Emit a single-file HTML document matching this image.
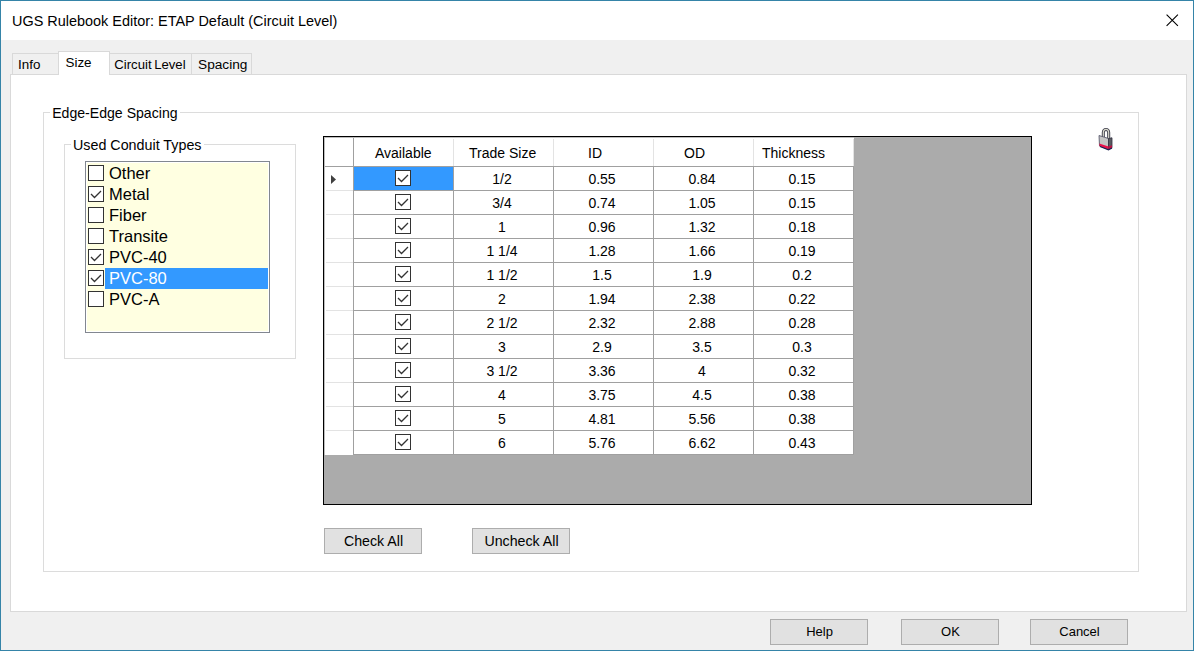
<!DOCTYPE html><html><head><meta charset="utf-8"><style>
*{margin:0;padding:0;box-sizing:border-box}
html,body{width:1194px;height:651px;overflow:hidden;background:#fff}
body{position:relative;font-family:"Liberation Sans",sans-serif;color:#000}
.ab{position:absolute}
.t{position:absolute;white-space:pre;line-height:1}
.btn{position:absolute;background:#E1E1E1;border:1px solid #ADADAD}
.cb{position:absolute;width:16px;height:16px;border:1px solid #333}

</style></head><body>
<div class="ab" style="left:0;top:0;width:1194px;height:651px;border:1px solid #3584A8;background:#F0F0F0"></div>
<div class="ab" style="left:1px;top:1px;width:1192px;height:39px;background:#fff"></div>
<div class="t" style="left:12px;top:13.5px;font-size:14.45px">UGS Rulebook Editor: ETAP Default (Circuit Level)</div>
<svg class="ab" style="left:1160px;top:8px" width="24" height="24"><path d="M6.6 6.6L17.9 17.9M17.9 6.6L6.6 17.9" stroke="#000" stroke-width="1.1"/></svg>
<div class="ab" style="left:12px;top:53px;width:47px;height:22px;background:#F0F0F0;border:1px solid #D9D9D9;border-bottom:none"></div>
<div class="ab" style="left:109px;top:53px;width:83px;height:22px;background:#F0F0F0;border:1px solid #D9D9D9;border-bottom:none"></div>
<div class="ab" style="left:191px;top:53px;width:61px;height:22px;background:#F0F0F0;border:1px solid #D9D9D9;border-bottom:none"></div>
<div class="ab" style="left:10px;top:74px;width:1177px;height:538px;background:#fff;border:1px solid #D9D9D9"></div>
<div class="ab" style="left:58px;top:51px;width:52px;height:24px;background:#fff;border:1px solid #D9D9D9;border-bottom:none"></div>
<div class="t" style="left:18px;top:57.6px;font-size:13.4px">Info</div>
<div class="t" style="left:65.5px;top:56px;font-size:13.4px">Size</div>
<div class="t" style="left:114.3px;top:58px;font-size:13.15px;word-spacing:-1px">Circuit Level</div>
<div class="t" style="left:198px;top:58px;font-size:13.7px">Spacing</div>
<div class="ab" style="left:43px;top:112px;width:1096px;height:460px;border:1px solid #DCDCDC"></div>
<div class="t" style="left:49.7px;top:106.3px;font-size:14.1px;background:#fff;padding:0 2.5px">Edge-Edge Spacing</div>
<div class="ab" style="left:64px;top:144px;width:232px;height:215px;border:1px solid #DCDCDC"></div>
<div class="t" style="left:70.5px;top:138px;font-size:14.3px;background:#fff;padding:0 2.5px">Used Conduit Types</div>
<div class="ab" style="left:85px;top:161px;width:185px;height:172px;border:1px solid #828790;background:#fff"></div>
<div class="ab" style="left:87px;top:163px;width:181px;height:168px;background:#FFFFE1"></div>
<div class="cb" style="left:88px;top:165px;background:#fff;border-color:#333"></div>
<div class="t" style="left:109px;top:165px;font-size:16.5px;color:#000">Other</div>
<div class="cb" style="left:88px;top:186px;background:#fff;border-color:#333"></div>
<svg class="ab" style="left:88px;top:186px" width="16" height="16"><path d="M3 8L6.5 11.5L13 5" fill="none" stroke="#333" stroke-width="1.3"/></svg>
<div class="t" style="left:109px;top:186px;font-size:16.5px;color:#000">Metal</div>
<div class="cb" style="left:88px;top:207px;background:#fff;border-color:#333"></div>
<div class="t" style="left:109px;top:207px;font-size:16.5px;color:#000">Fiber</div>
<div class="cb" style="left:88px;top:228px;background:#fff;border-color:#333"></div>
<div class="t" style="left:109px;top:228px;font-size:16.5px;color:#000">Transite</div>
<div class="cb" style="left:88px;top:249px;background:#fff;border-color:#333"></div>
<svg class="ab" style="left:88px;top:249px" width="16" height="16"><path d="M3 8L6.5 11.5L13 5" fill="none" stroke="#333" stroke-width="1.3"/></svg>
<div class="t" style="left:109px;top:249px;font-size:16.5px;color:#000">PVC-40</div>
<div class="ab" style="left:105px;top:268px;width:163px;height:21px;background:#3399FF"></div>
<div class="cb" style="left:88px;top:270px;background:#fff;border-color:#333"></div>
<svg class="ab" style="left:88px;top:270px" width="16" height="16"><path d="M3 8L6.5 11.5L13 5" fill="none" stroke="#333" stroke-width="1.3"/></svg>
<div class="t" style="left:109px;top:270px;font-size:16.5px;color:#fff">PVC-80</div>
<div class="cb" style="left:88px;top:291px;background:#fff;border-color:#333"></div>
<div class="t" style="left:109px;top:291px;font-size:16.5px;color:#000">PVC-A</div>
<div class="ab" style="left:323px;top:136px;width:709px;height:369px;border:1px solid #000;background:#ABABAB"></div>
<div class="ab" style="left:324px;top:137px;width:530px;height:30px;background:#fff"></div>
<div class="ab" style="left:324px;top:137px;width:30px;height:318px;background:#fff"></div>
<div class="ab" style="left:354px;top:167px;width:500px;height:288px;background:#fff"></div>
<div class="ab" style="left:324px;top:166px;width:530px;height:1px;background:#A0A0A0"></div>
<div class="ab" style="left:353px;top:137px;width:1px;height:318px;background:#A0A0A0"></div>
<div class="ab" style="left:453px;top:139px;width:1px;height:27px;background:#E3E3E3"></div>
<div class="ab" style="left:453px;top:166px;width:1px;height:289px;background:#A0A0A0"></div>
<div class="ab" style="left:553px;top:139px;width:1px;height:27px;background:#E3E3E3"></div>
<div class="ab" style="left:553px;top:166px;width:1px;height:289px;background:#A0A0A0"></div>
<div class="ab" style="left:653px;top:139px;width:1px;height:27px;background:#E3E3E3"></div>
<div class="ab" style="left:653px;top:166px;width:1px;height:289px;background:#A0A0A0"></div>
<div class="ab" style="left:753px;top:139px;width:1px;height:27px;background:#E3E3E3"></div>
<div class="ab" style="left:753px;top:166px;width:1px;height:289px;background:#A0A0A0"></div>
<div class="ab" style="left:853px;top:139px;width:1px;height:27px;background:#E3E3E3"></div>
<div class="ab" style="left:853px;top:166px;width:1px;height:289px;background:#A0A0A0"></div>
<div class="ab" style="left:354px;top:190px;width:500px;height:1px;background:#A0A0A0"></div>
<div class="ab" style="left:326px;top:190px;width:27px;height:1px;background:#E3E3E3"></div>
<div class="ab" style="left:354px;top:214px;width:500px;height:1px;background:#A0A0A0"></div>
<div class="ab" style="left:326px;top:214px;width:27px;height:1px;background:#E3E3E3"></div>
<div class="ab" style="left:354px;top:238px;width:500px;height:1px;background:#A0A0A0"></div>
<div class="ab" style="left:326px;top:238px;width:27px;height:1px;background:#E3E3E3"></div>
<div class="ab" style="left:354px;top:262px;width:500px;height:1px;background:#A0A0A0"></div>
<div class="ab" style="left:326px;top:262px;width:27px;height:1px;background:#E3E3E3"></div>
<div class="ab" style="left:354px;top:286px;width:500px;height:1px;background:#A0A0A0"></div>
<div class="ab" style="left:326px;top:286px;width:27px;height:1px;background:#E3E3E3"></div>
<div class="ab" style="left:354px;top:310px;width:500px;height:1px;background:#A0A0A0"></div>
<div class="ab" style="left:326px;top:310px;width:27px;height:1px;background:#E3E3E3"></div>
<div class="ab" style="left:354px;top:334px;width:500px;height:1px;background:#A0A0A0"></div>
<div class="ab" style="left:326px;top:334px;width:27px;height:1px;background:#E3E3E3"></div>
<div class="ab" style="left:354px;top:358px;width:500px;height:1px;background:#A0A0A0"></div>
<div class="ab" style="left:326px;top:358px;width:27px;height:1px;background:#E3E3E3"></div>
<div class="ab" style="left:354px;top:382px;width:500px;height:1px;background:#A0A0A0"></div>
<div class="ab" style="left:326px;top:382px;width:27px;height:1px;background:#E3E3E3"></div>
<div class="ab" style="left:354px;top:406px;width:500px;height:1px;background:#A0A0A0"></div>
<div class="ab" style="left:326px;top:406px;width:27px;height:1px;background:#E3E3E3"></div>
<div class="ab" style="left:354px;top:430px;width:500px;height:1px;background:#A0A0A0"></div>
<div class="ab" style="left:326px;top:430px;width:27px;height:1px;background:#E3E3E3"></div>
<div class="ab" style="left:354px;top:454px;width:500px;height:1px;background:#A0A0A0"></div>
<div class="ab" style="left:324px;top:137px;width:1px;height:318px;background:#BEBEBE"></div>
<div class="ab" style="left:324px;top:137px;width:530px;height:1px;background:#BEBEBE"></div>
<div class="ab" style="left:354px;top:167px;width:99px;height:23px;background:#3399FF"></div>
<svg class="ab" style="left:330px;top:174px" width="8" height="11"><path d="M1 1L6 5.5L1 10Z" fill="#404040"/></svg>
<div class="t" style="left:375px;top:146px;font-size:14px">Available</div>
<div class="t" style="left:469px;top:146px;font-size:14px">Trade Size</div>
<div class="t" style="left:588px;top:146px;font-size:14px">ID</div>
<div class="t" style="left:684px;top:146px;font-size:14px">OD</div>
<div class="t" style="left:762px;top:146px;font-size:14px">Thickness</div>
<div class="cb" style="left:395px;top:170px;width:16px;height:16px;background:#fff;border-color:#333"></div>
<svg class="ab" style="left:395px;top:170px" width="16" height="16"><path d="M3 8L6.5 11.5L13 5" fill="none" stroke="#333" stroke-width="1.3"/></svg>
<div class="t" style="left:452.5px;top:172px;width:99px;text-align:center;font-size:14px">1/2</div>
<div class="t" style="left:552.5px;top:172px;width:99px;text-align:center;font-size:14px">0.55</div>
<div class="t" style="left:652.5px;top:172px;width:99px;text-align:center;font-size:14px">0.84</div>
<div class="t" style="left:752.5px;top:172px;width:99px;text-align:center;font-size:14px">0.15</div>
<div class="cb" style="left:395px;top:194px;width:16px;height:16px;background:#fff;border-color:#333"></div>
<svg class="ab" style="left:395px;top:194px" width="16" height="16"><path d="M3 8L6.5 11.5L13 5" fill="none" stroke="#333" stroke-width="1.3"/></svg>
<div class="t" style="left:452.5px;top:196px;width:99px;text-align:center;font-size:14px">3/4</div>
<div class="t" style="left:552.5px;top:196px;width:99px;text-align:center;font-size:14px">0.74</div>
<div class="t" style="left:652.5px;top:196px;width:99px;text-align:center;font-size:14px">1.05</div>
<div class="t" style="left:752.5px;top:196px;width:99px;text-align:center;font-size:14px">0.15</div>
<div class="cb" style="left:395px;top:218px;width:16px;height:16px;background:#fff;border-color:#333"></div>
<svg class="ab" style="left:395px;top:218px" width="16" height="16"><path d="M3 8L6.5 11.5L13 5" fill="none" stroke="#333" stroke-width="1.3"/></svg>
<div class="t" style="left:452.5px;top:220px;width:99px;text-align:center;font-size:14px">1</div>
<div class="t" style="left:552.5px;top:220px;width:99px;text-align:center;font-size:14px">0.96</div>
<div class="t" style="left:652.5px;top:220px;width:99px;text-align:center;font-size:14px">1.32</div>
<div class="t" style="left:752.5px;top:220px;width:99px;text-align:center;font-size:14px">0.18</div>
<div class="cb" style="left:395px;top:242px;width:16px;height:16px;background:#fff;border-color:#333"></div>
<svg class="ab" style="left:395px;top:242px" width="16" height="16"><path d="M3 8L6.5 11.5L13 5" fill="none" stroke="#333" stroke-width="1.3"/></svg>
<div class="t" style="left:452.5px;top:244px;width:99px;text-align:center;font-size:14px">1 1/4</div>
<div class="t" style="left:552.5px;top:244px;width:99px;text-align:center;font-size:14px">1.28</div>
<div class="t" style="left:652.5px;top:244px;width:99px;text-align:center;font-size:14px">1.66</div>
<div class="t" style="left:752.5px;top:244px;width:99px;text-align:center;font-size:14px">0.19</div>
<div class="cb" style="left:395px;top:266px;width:16px;height:16px;background:#fff;border-color:#333"></div>
<svg class="ab" style="left:395px;top:266px" width="16" height="16"><path d="M3 8L6.5 11.5L13 5" fill="none" stroke="#333" stroke-width="1.3"/></svg>
<div class="t" style="left:452.5px;top:268px;width:99px;text-align:center;font-size:14px">1 1/2</div>
<div class="t" style="left:552.5px;top:268px;width:99px;text-align:center;font-size:14px">1.5</div>
<div class="t" style="left:652.5px;top:268px;width:99px;text-align:center;font-size:14px">1.9</div>
<div class="t" style="left:752.5px;top:268px;width:99px;text-align:center;font-size:14px">0.2</div>
<div class="cb" style="left:395px;top:290px;width:16px;height:16px;background:#fff;border-color:#333"></div>
<svg class="ab" style="left:395px;top:290px" width="16" height="16"><path d="M3 8L6.5 11.5L13 5" fill="none" stroke="#333" stroke-width="1.3"/></svg>
<div class="t" style="left:452.5px;top:292px;width:99px;text-align:center;font-size:14px">2</div>
<div class="t" style="left:552.5px;top:292px;width:99px;text-align:center;font-size:14px">1.94</div>
<div class="t" style="left:652.5px;top:292px;width:99px;text-align:center;font-size:14px">2.38</div>
<div class="t" style="left:752.5px;top:292px;width:99px;text-align:center;font-size:14px">0.22</div>
<div class="cb" style="left:395px;top:314px;width:16px;height:16px;background:#fff;border-color:#333"></div>
<svg class="ab" style="left:395px;top:314px" width="16" height="16"><path d="M3 8L6.5 11.5L13 5" fill="none" stroke="#333" stroke-width="1.3"/></svg>
<div class="t" style="left:452.5px;top:316px;width:99px;text-align:center;font-size:14px">2 1/2</div>
<div class="t" style="left:552.5px;top:316px;width:99px;text-align:center;font-size:14px">2.32</div>
<div class="t" style="left:652.5px;top:316px;width:99px;text-align:center;font-size:14px">2.88</div>
<div class="t" style="left:752.5px;top:316px;width:99px;text-align:center;font-size:14px">0.28</div>
<div class="cb" style="left:395px;top:338px;width:16px;height:16px;background:#fff;border-color:#333"></div>
<svg class="ab" style="left:395px;top:338px" width="16" height="16"><path d="M3 8L6.5 11.5L13 5" fill="none" stroke="#333" stroke-width="1.3"/></svg>
<div class="t" style="left:452.5px;top:340px;width:99px;text-align:center;font-size:14px">3</div>
<div class="t" style="left:552.5px;top:340px;width:99px;text-align:center;font-size:14px">2.9</div>
<div class="t" style="left:652.5px;top:340px;width:99px;text-align:center;font-size:14px">3.5</div>
<div class="t" style="left:752.5px;top:340px;width:99px;text-align:center;font-size:14px">0.3</div>
<div class="cb" style="left:395px;top:362px;width:16px;height:16px;background:#fff;border-color:#333"></div>
<svg class="ab" style="left:395px;top:362px" width="16" height="16"><path d="M3 8L6.5 11.5L13 5" fill="none" stroke="#333" stroke-width="1.3"/></svg>
<div class="t" style="left:452.5px;top:364px;width:99px;text-align:center;font-size:14px">3 1/2</div>
<div class="t" style="left:552.5px;top:364px;width:99px;text-align:center;font-size:14px">3.36</div>
<div class="t" style="left:652.5px;top:364px;width:99px;text-align:center;font-size:14px">4</div>
<div class="t" style="left:752.5px;top:364px;width:99px;text-align:center;font-size:14px">0.32</div>
<div class="cb" style="left:395px;top:386px;width:16px;height:16px;background:#fff;border-color:#333"></div>
<svg class="ab" style="left:395px;top:386px" width="16" height="16"><path d="M3 8L6.5 11.5L13 5" fill="none" stroke="#333" stroke-width="1.3"/></svg>
<div class="t" style="left:452.5px;top:388px;width:99px;text-align:center;font-size:14px">4</div>
<div class="t" style="left:552.5px;top:388px;width:99px;text-align:center;font-size:14px">3.75</div>
<div class="t" style="left:652.5px;top:388px;width:99px;text-align:center;font-size:14px">4.5</div>
<div class="t" style="left:752.5px;top:388px;width:99px;text-align:center;font-size:14px">0.38</div>
<div class="cb" style="left:395px;top:410px;width:16px;height:16px;background:#fff;border-color:#333"></div>
<svg class="ab" style="left:395px;top:410px" width="16" height="16"><path d="M3 8L6.5 11.5L13 5" fill="none" stroke="#333" stroke-width="1.3"/></svg>
<div class="t" style="left:452.5px;top:412px;width:99px;text-align:center;font-size:14px">5</div>
<div class="t" style="left:552.5px;top:412px;width:99px;text-align:center;font-size:14px">4.81</div>
<div class="t" style="left:652.5px;top:412px;width:99px;text-align:center;font-size:14px">5.56</div>
<div class="t" style="left:752.5px;top:412px;width:99px;text-align:center;font-size:14px">0.38</div>
<div class="cb" style="left:395px;top:434px;width:16px;height:16px;background:#fff;border-color:#333"></div>
<svg class="ab" style="left:395px;top:434px" width="16" height="16"><path d="M3 8L6.5 11.5L13 5" fill="none" stroke="#333" stroke-width="1.3"/></svg>
<div class="t" style="left:452.5px;top:436px;width:99px;text-align:center;font-size:14px">6</div>
<div class="t" style="left:552.5px;top:436px;width:99px;text-align:center;font-size:14px">5.76</div>
<div class="t" style="left:652.5px;top:436px;width:99px;text-align:center;font-size:14px">6.62</div>
<div class="t" style="left:752.5px;top:436px;width:99px;text-align:center;font-size:14px">0.43</div>
<div class="btn" style="left:324px;top:528px;width:98px;height:26px"></div>
<div class="t" style="left:324.5px;top:533.8px;width:98px;text-align:center;font-size:14.2px">Check All</div>
<div class="btn" style="left:472px;top:528px;width:98px;height:26px"></div>
<div class="t" style="left:472.5px;top:533.8px;width:98px;text-align:center;font-size:14.2px">Uncheck All</div>
<div class="btn" style="left:770px;top:619px;width:98px;height:26px"></div>
<div class="t" style="left:770.5px;top:624.8px;width:98px;text-align:center;font-size:13px">Help</div>
<div class="btn" style="left:901px;top:619px;width:98px;height:26px"></div>
<div class="t" style="left:901.5px;top:624.8px;width:98px;text-align:center;font-size:13px">OK</div>
<div class="btn" style="left:1030px;top:619px;width:98px;height:26px"></div>
<div class="t" style="left:1030.5px;top:624.8px;width:98px;text-align:center;font-size:13px">Cancel</div>
<svg class="ab" style="left:1094px;top:124px" width="24" height="30">
<path d="M9.3 13V8.6A2.7 3.2 0 0 1 14.7 8.6V15" fill="none" stroke="#3a3a48" stroke-width="3"/>
<path d="M9.3 13V8.6A2.7 3.2 0 0 1 14.7 8.6V15" fill="none" stroke="#d8d8cc" stroke-width="1.2"/>
<polygon points="5,11.5 14.5,14.5 14.5,25.5 5.5,22" fill="#C4C4C4" stroke="#4a4a60" stroke-width="0.8"/>
<polygon points="14.5,14.5 18,13.8 18,23.8 14.5,25.5" fill="#5a5a60" stroke="#303040" stroke-width="0.8"/>
<polygon points="5.3,19.4 14.5,22.4 14.5,25.3 5.6,22.2" fill="#E8104A"/>
<polygon points="14.5,22.4 18,21.3 18,23.8 14.5,25.3" fill="#C01040"/>
<path d="M6 22.5L14.5 25.8L18 24" fill="none" stroke="#1a2050" stroke-width="1.2"/>
</svg>
</body></html>
